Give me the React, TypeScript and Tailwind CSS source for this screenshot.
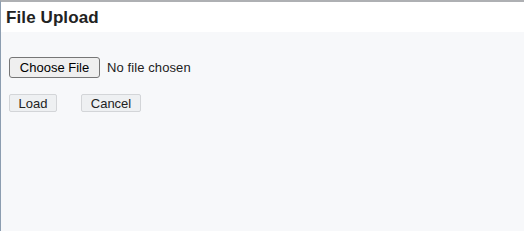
import React from "react";

const App: React.FC = () => {
  return (
    <div
      className="w-[524px] h-[231px] bg-[#f7f8fa] border-t-[2px] border-t-[#aeb0b3] border-l border-l-[#8c9db0] flex flex-col"
      style={{ fontFamily: '"Liberation Sans", Arial, sans-serif' }}
    >
      <div className="h-[30px] bg-white flex items-center px-[5px] pt-[1px]">
        <h1 className="text-[17px] font-bold text-[#222] leading-none tracking-[0.1px]">File Upload</h1>
      </div>

      <div className="px-[8px] pt-[25px]">
        <div className="flex items-center gap-[7px] h-[21px]">
          <button className="h-[21px] w-[91px] text-[13px] text-black bg-[#efefef] border border-[#767676] rounded-[3px] leading-none">
            Choose File
          </button>
          <span className="text-[13px] text-[#222] tracking-[0.1px]">No file chosen</span>
        </div>

        <div className="flex items-center gap-[24px] mt-[16px]">
          <button className="h-[18px] w-[48px] text-[13px] text-[#222] bg-[#eef0f2] border border-[#d3d5d8] rounded-[2px] leading-none">
            Load
          </button>
          <button className="h-[18px] w-[60px] text-[13px] text-[#222] bg-[#eef0f2] border border-[#d3d5d8] rounded-[2px] leading-none">
            Cancel
          </button>
        </div>
      </div>
    </div>
  );
};

export default App;
